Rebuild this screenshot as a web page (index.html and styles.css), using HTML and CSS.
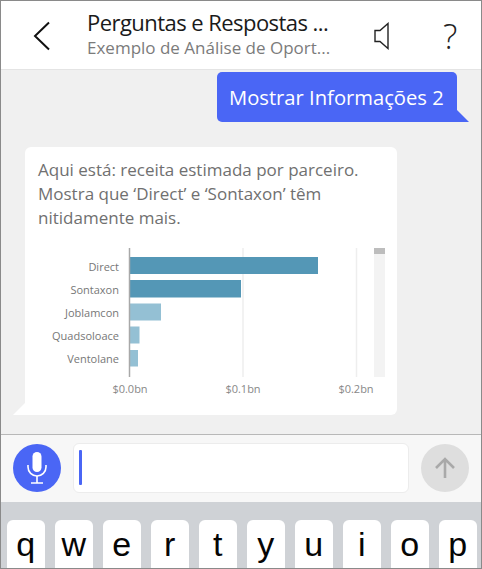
FILE: index.html
```html
<!DOCTYPE html>
<html lang="pt">
  <head>
    <meta charset="UTF-8" />
    <title>Perguntas e Respostas</title>
    <link rel="stylesheet" href="styles.css">
  </head>
  <body>
    <div class="phone">
      <header class="top">
        <svg class="back" width="20" height="30" viewBox="0 0 20 30">
          <path d="M17 1.500 L3 15 L17 28.500" fill="none" stroke="#111" stroke-width="2" />
        </svg>
        <div class="titles">
          <div class="title">Perguntas e Respostas ...</div>
          <div class="subtitle">Exemplo de Análise de Oport...</div>
        </div>
        <svg class="speaker" width="16" height="28" viewBox="0 0 16 28">
          <path d="M14 1.500 V26.500 L6 19.500 H1 V8.500 H6 Z" fill="none" stroke="#222" stroke-width="1.400" />
        </svg>
        <div class="help">?</div>
      </header>

      <main class="chat">
        <div class="sent">Mostrar Informações 2</div>
        <div class="card">
          <p class="answer">Aqui está: receita estimada por parceiro. Mostra que ‘Direct’ e ‘Sontaxon’ têm nitidamente mais.</p>
          <svg class="chart" width="372" height="160" viewBox="25 245 372 160">
            <rect x="374" y="249" width="11" height="129" fill="#f3f3f3" />
            <rect x="374" y="249" width="11" height="6" fill="#bdbdbd" />
            <line x1="243" y1="249" x2="243" y2="378" stroke="#eee" stroke-width="1.500" />
            <line x1="356.500" y1="249" x2="356.500" y2="378" stroke="#eee" stroke-width="1.500" />
            <rect x="130" y="258" width="188" height="17" fill="#5497b6" />
            <rect x="130" y="281" width="111" height="17.500" fill="#5497b6" />
            <rect x="130" y="304.500" width="31" height="17" fill="#94c0d4" />
            <rect x="130" y="327.500" width="9.500" height="17" fill="#94c0d4" />
            <rect x="130" y="351" width="8" height="16.500" fill="#94c0d4" />
            <line x1="129.500" y1="249" x2="129.500" y2="378" stroke="#a8a8a8" stroke-width="1.500" />
            <g class="cat">
              <text x="119" y="271.500">Direct</text>
              <text x="119" y="294.500">Sontaxon</text>
              <text x="119" y="317.500">Joblamcon</text>
              <text x="119" y="341">Quadsoloace</text>
              <text x="119" y="364">Ventolane</text>
            </g>
            <g class="val">
              <text x="130" y="394">$0.0bn</text>
              <text x="243" y="394">$0.1bn</text>
              <text x="356" y="394">$0.2bn</text>
            </g>
          </svg>
        </div>
      </main>

      <div class="composer">
        <div class="mic">
          <svg width="24" height="34" viewBox="0 0 24 34">
            <rect x="7.500" y="1" width="9" height="20" rx="4.500" fill="#fff" />
            <path d="M3 14 V16 A9 9 0 0 0 21 16 V14" fill="none" stroke="#fff" stroke-width="1.600" />
            <path d="M12 25 V31.500 M6 32 H18" fill="none" stroke="#fff" stroke-width="1.600" />
          </svg>
        </div>
        <div class="field"><span class="caret"></span></div>
        <div class="send">
          <svg width="22" height="22" viewBox="0 0 22 22">
            <path d="M11 21 V2.500 M2 11 L11 2 L20 11" fill="none" stroke="#a9a9a9" stroke-width="2.600" />
          </svg>
        </div>
      </div>

      <div class="keyboard">
        <div class="key">q</div>
        <div class="key">w</div>
        <div class="key">e</div>
        <div class="key">r</div>
        <div class="key">t</div>
        <div class="key">y</div>
        <div class="key">u</div>
        <div class="key">i</div>
        <div class="key">o</div>
        <div class="key">p</div>
      </div>
    </div>
  </body>
</html>
```

FILE: styles.css
```css
html,
body {
  margin: 0;
  height: 100%;
}

body {
  font-family: "Open Sans", "Noto Sans", sans-serif;
  overflow: hidden;
}

.phone {
  box-sizing: border-box;
  width: 482px;
  height: 569px;
  border: 1px solid #8a8a8a;
  display: flex;
  flex-direction: column;
  background: #f0f0f0;
  overflow: hidden;
}

/* header */
.top {
  flex: none;
  height: 69px;
  background: #fff;
  border-bottom: 1px solid #e4e4e4;
  display: flex;
  align-items: center;
  box-sizing: border-box;
}

.back {
  margin-left: 31px;
  margin-top: 1px;
}

.titles {
  margin-left: 35px;
  margin-top: -4px;
  width: 277px;
  white-space: nowrap;
}

.title {
  font-size: 22px;
  line-height: 28px;
  color: #1a1a1a;
  letter-spacing: -0.55px;
}

.subtitle {
  font-size: 17px;
  line-height: 23px;
  color: #7b7b7b;
}

.speaker {
  margin-left: 10px;
  margin-top: 2px;
}

.help {
  margin-left: 53px;
  font-size: 34px;
  line-height: 40px;
  font-weight: 300;
  color: #222;
  margin-top: 2px;
}

/* chat */
.chat {
  flex: 1;
  min-height: 0;
  display: flex;
  flex-direction: column;
}

.sent {
  position: relative;
  align-self: flex-end;
  margin: 2px 24px 0 0;
  width: 240px;
  height: 50px;
  box-sizing: border-box;
  padding-left: 12px;
  line-height: 50px;
  font-size: 20.200px;
  color: #fff;
  background: #4a66f5;
  border-radius: 5px 5px 0 5px;
  white-space: nowrap;
}

.sent::after {
  content: "";
  position: absolute;
  left: 100%;
  bottom: 0;
  border-style: solid;
  border-width: 12px 0 0 12px;
  border-color: transparent transparent transparent #4a66f5;
}

.card {
  position: relative;
  margin: 25px 0 0 24px;
  width: 372px;
  height: 268px;
  background: #fff;
  border-radius: 6px 6px 6px 0;
}

.card::after {
  content: "";
  position: absolute;
  right: 100%;
  bottom: 0;
  border-style: solid;
  border-width: 0 0 12px 12px;
  border-color: transparent transparent #fff transparent;
}

.answer {
  margin: 0;
  padding: 11px 20px 0 13px;
  height: 89px;
  box-sizing: border-box;
  font-size: 17px;
  line-height: 24px;
  color: #707070;
}

.chart {
  display: block;
  margin-top: 8px;
}

.cat text {
  font-size: 11px;
  fill: #777;
  text-anchor: end;
}

.val text {
  font-size: 11px;
  fill: #888;
  text-anchor: middle;
}

/* input bar */
.composer {
  flex: none;
  height: 68px;
  background: #f7f7f7;
  border-top: 1px solid #b8b8b8;
  box-sizing: border-box;
  display: flex;
  align-items: center;
  padding: 0 0 2px 12px;
}

.mic {
  width: 48px;
  height: 48px;
  border-radius: 50%;
  background: #4a66f5;
  display: flex;
  align-items: center;
  justify-content: center;
}

.field {
  margin-left: 12px;
  width: 336px;
  height: 50px;
  box-sizing: border-box;
  background: #fff;
  border: 1px solid #ececec;
  border-radius: 6px;
  display: flex;
  align-items: center;
  padding-left: 5px;
}

.caret {
  width: 3px;
  height: 35px;
  border-radius: 1px;
  background: #4a66f5;
}

.send {
  margin-left: 12px;
  width: 48px;
  height: 48px;
  border-radius: 50%;
  background: #dedede;
  display: flex;
  align-items: center;
  justify-content: center;
}

/* keyboard */
.keyboard {
  flex: none;
  height: 66px;
  box-sizing: border-box;
  background: #cfd2d6;
  padding: 18px 0 0 5.500px;
  display: flex;
  gap: 9.500px;
  overflow: hidden;
}

.key {
  flex: none;
  width: 38.500px;
  height: 60px;
  background: #fff;
  border-radius: 6px;
  text-align: center;
  font-family: "Liberation Sans", sans-serif;
  font-size: 34px;
  line-height: 48px;
  color: #050505;
}
```
